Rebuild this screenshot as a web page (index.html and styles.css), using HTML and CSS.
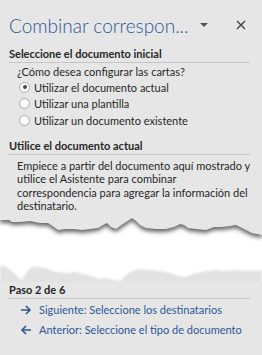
FILE: index.html
```html
<!DOCTYPE html>
<html lang="es">
<head>
    <meta charset="UTF-8">
    <meta name="viewport" content="width=device-width, initial-scale=1.0">
    <title>Combinar correspondencia</title>
    <link rel="stylesheet" href="styles.css">
</head>
<body>
    <div class="pane">
        <div class="pane-header">
            <h1 class="pane-title">Combinar correspon...</h1>
            <span class="caret"></span>
            <span class="close">
                <svg width="10" height="10" viewBox="0 0 10 10">
                    <path d="M1 1 L9 9 M9 1 L1 9" stroke="#444" stroke-width="1.4" fill="none"/>
                </svg>
            </span>
        </div>

        <div class="section">
            <h2>Seleccione el documento inicial</h2>
            <div class="section-body">
                <p class="question">¿Cómo desea configurar las cartas?</p>
                <label class="radio"><span class="dot checked"></span>Utilizar el documento actual</label>
                <label class="radio"><span class="dot"></span>Utilizar una plantilla</label>
                <label class="radio"><span class="dot"></span>Utilizar un documento existente</label>
            </div>
        </div>

        <div class="section">
            <h2>Utilice el documento actual</h2>
            <p class="desc">Empiece a partir del documento aquí mostrado y utilice el Asistente para combinar correspondencia para agregar la información del destinatario.</p>
        </div>
    </div>

    <!-- torn page effect -->
    <svg class="tear" width="262" height="69" viewBox="0 0 262 69">
        <defs>
            <filter id="shadow" x="-5%" y="-50%" width="110%" height="200%">
                <feGaussianBlur stdDeviation="2"/>
            </filter>
            <filter id="soft" x="-5%" y="-50%" width="110%" height="200%">
                <feGaussianBlur stdDeviation="1"/>
            </filter>
        </defs>
        <rect width="262" height="69" fill="#fff"/>
        <path d="M0,75 L0,52 L6,54 L12,58 L18,64 L22,67 L26,60 L32,54 L40,54 L48,56 L56,59 L64,60 L74,59 L84,61 L94,64 L100,66 L106,65 L114,67 L120,68 L126,62 L132,58 L140,56 L150,57 L160,58 L170,60 L178,63 L186,64 L196,60 L206,58 L216,57 L226,58 L238,57 L250,58 L262,57 L262,75 Z" fill="#e2e2e2" filter="url(#soft)"/>
        <path transform="translate(0,3)" d="M0,0 L0,7 L9,7 L12,9 L20,9 L30,8 L40,10 L48,10 L54,14 L58,17 L66,16 L74,16 L82,17 L90,16 L98,15 L103,12 L107,10 L111,14 L116,16 L120,13 L126,9 L132,5 L136,8 L140,12 L146,15 L156,16 L166,16 L174,14 L180,11 L184,12 L188,15 L196,16 L206,17 L214,14 L222,14 L230,13 L236,12 L240,14 L246,17 L252,20 L262,22 L262,0 Z" fill="#666" filter="url(#shadow)"/>
        <path d="M0,0 L0,7 L9,7 L12,9 L20,9 L30,8 L40,10 L48,10 L54,14 L58,17 L66,16 L74,16 L82,17 L90,16 L98,15 L103,12 L107,10 L111,14 L116,16 L120,13 L126,9 L132,5 L136,8 L140,12 L146,15 L156,16 L166,16 L174,14 L180,11 L184,12 L188,15 L196,16 L206,17 L214,14 L222,14 L230,13 L236,12 L240,14 L246,17 L252,20 L262,22 L262,0 Z" fill="#e6e6e6"/>
    </svg>

    <div class="pane pane-footer">
        <div class="section">
            <h2>Paso 2 de 6</h2>
            <a class="step-link" href="#">
                <svg width="12" height="10" viewBox="0 0 12 10">
                    <path d="M1 5 H10 M6 1 L10 5 L6 9" stroke="#2b579a" stroke-width="1.6" fill="none"/>
                </svg>
                Siguiente: Seleccione los destinatarios
            </a>
            <a class="step-link" href="#">
                <svg width="12" height="10" viewBox="0 0 12 10">
                    <path d="M11 5 H2 M6 1 L2 5 L6 9" stroke="#2b579a" stroke-width="1.6" fill="none"/>
                </svg>
                Anterior: Seleccione el tipo de documento
            </a>
        </div>
    </div>
</body>
</html>
```

FILE: styles.css
```css
body {
    margin: 0;
    width: 262px;
    height: 355px;
    overflow: hidden;
    background: #e6e6e6;
    font-family: Lato, 'Open Sans', sans-serif;
    font-size: 11px;
    color: #262626;
}
.pane {
    padding: 0 12px 0 9px;
}
.pane-header {
    display: flex;
    align-items: center;
    height: 42px;
    padding-top: 4px;
}
.pane-title {
    margin: 0;
    font-size: 19px;
    font-weight: 300;
    color: #2b579a;
    white-space: nowrap;
}
.caret {
    width: 0;
    height: 0;
    border-left: 4px solid transparent;
    border-right: 4px solid transparent;
    border-top: 4px solid #555;
    margin-left: auto;
    margin-right: 28px;
}
.close {
    display: flex;
    margin-right: 4px;
}
.section h2 {
    margin: 0;
    font-size: 11px;
    font-weight: bold;
    line-height: 16px;
    border-bottom: 1px solid #c6c6c6;
}
.section-body {
    padding-left: 8px;
    padding-top: 2px;
    padding-bottom: 9px;
}
.question {
    margin: 0;
    line-height: 14px;
}
.radio {
    display: flex;
    align-items: center;
    gap: 4px;
    height: 16.5px;
    padding-left: 2px;
}
.dot {
    width: 11px;
    height: 11px;
    border-radius: 50%;
    border: 1px solid #ababab;
    background: #fbfbfb;
    box-sizing: border-box;
    position: relative;
}
.dot.checked::after {
    content: "";
    position: absolute;
    left: 2.5px;
    top: 2.5px;
    width: 4px;
    height: 4px;
    border-radius: 50%;
    background: #444;
}
.desc {
    margin: 4px 0 0 8px;
    line-height: 13.5px;
}
.tear {
    display: block;
}
.step-link {
    display: flex;
    align-items: center;
    gap: 7px;
    padding-left: 11px;
    height: 20px;
    color: #2b579a;
    text-decoration: none;
}
.pane-footer h2 {
    margin-bottom: 1px;
}
```
